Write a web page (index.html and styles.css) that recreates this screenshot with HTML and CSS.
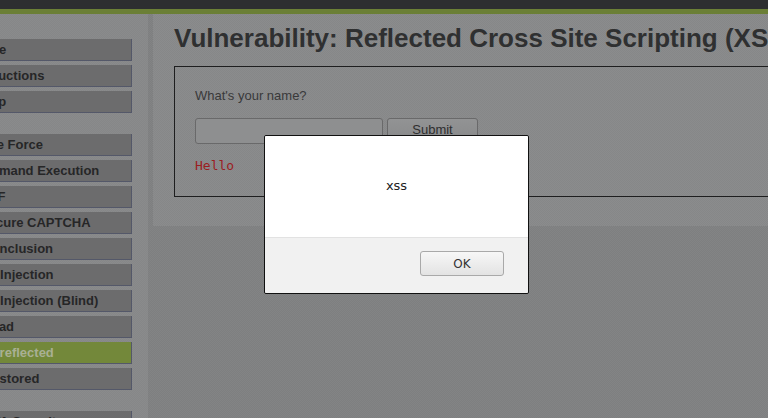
FILE: index.html
```html
<!DOCTYPE html>
<html>
<head>
<meta charset="utf-8">
<link rel="stylesheet" href="styles.css">
</head>
<body>
<div class="topbar"></div>
<div class="page">
  <nav class="sidebar">
    <ul class="menu">
      <li>Home</li>
      <li>Instructions</li>
      <li>Setup</li>
    </ul>
    <ul class="menu">
      <li>Brute Force</li>
      <li>Command Execution</li>
      <li>CSRF</li>
      <li>Insecure CAPTCHA</li>
      <li>File Inclusion</li>
      <li>SQL Injection</li>
      <li>SQL Injection (Blind)</li>
      <li>Upload</li>
      <li class="active">XSS reflected</li>
      <li>XSS stored</li>
    </ul>
    <ul class="menu">
      <li>DVWA Security</li>
      <li>PHP Info</li>
      <li>About</li>
    </ul>
  </nav>
  <main class="main">
    <div class="main-body">
      <h1 class="title">Vulnerability: Reflected Cross Site Scripting (XSS)</h1>
      <div class="vuln-box">
        <form class="form">
          <p class="label">What's your name?</p>
          <div class="row">
            <input class="field" type="text">
            <button class="submit" type="button">Submit</button>
          </div>
        </form>
        <pre class="output">Hello</pre>
      </div>
    </div>
  </main>
</div>
<div class="dialog">
  <div class="dialog-msg">xss</div>
  <div class="dialog-actions">
    <button class="ok" type="button">OK</button>
  </div>
</div>
</body>
</html>
```
FILE: styles.css
```css
html, body {
  margin: 0;
  padding: 0;
  height: 100%;
  overflow: hidden;
}
body {
  background-color: #838485;
  background-image: repeating-conic-gradient(rgba(0,0,0,0.035) 0% 25%, transparent 0% 50%);
  background-size: 2px 2px;
  font-family: "Liberation Sans", Arial, sans-serif;
}
.topbar {
  height: 9px;
  background: #2d2e30;
  border-bottom: 5px solid #6b7f36;
}
.page {
  display: flex;
  gap: 5px;
  height: calc(100% - 14px);
}
.sidebar {
  flex: 0 0 148px;
  background-color: #8a8b8c;
  background-image: repeating-conic-gradient(rgba(0,0,0,0.03) 0% 25%, transparent 0% 50%);
  background-size: 2px 2px;
  padding-top: 25px;
  overflow: hidden;
}
.menu {
  list-style: none;
  margin: 0 0 21px -40px;
  padding: 0;
  width: 172px;
}
.menu li {
  box-sizing: border-box;
  height: 22px;
  line-height: 21px;
  margin-bottom: 4px;
  padding-left: 10px;
  background: #6c6c6d;
  border-right: 1px solid #545869;
  border-bottom: 1px solid #545869;
  color: #262627;
  font-weight: bold;
  font-size: 13px;
  white-space: nowrap;
}
.menu li:last-child {
  margin-bottom: 0;
}
.menu li.active {
  background: #73883a;
  color: #a9b094;
}
.main {
  flex: 1;
  min-width: 0;
  overflow: hidden;
}
.main-body {
  background-color: #8b8c8d;
  background-image: repeating-conic-gradient(rgba(0,0,0,0.035) 0% 25%, transparent 0% 50%);
  background-size: 2px 2px;
  padding: 9px 0 29px 21px;
}
.title {
  margin: 0 0 13px;
  font-size: 26px;
  line-height: 30px;
  font-weight: bold;
  color: #2f3031;
  white-space: nowrap;
}
.vuln-box {
  width: 700px;
  border: 1px solid #1e1e1f;
  padding: 21px 20px 23px;
}
.form {
  margin: 0 0 14px;
}
.label {
  margin: 0 0 15px;
  font-size: 13px;
  line-height: 15px;
  color: #39393a;
}
.row {
  display: flex;
  gap: 4px;
}
.field {
  box-sizing: border-box;
  width: 188px;
  height: 26px;
  margin: 0;
  border: 1px solid #69696a;
  border-radius: 3px;
  background: #8e8f90;
}
.submit {
  box-sizing: border-box;
  width: 91px;
  height: 26px;
  margin: 0;
  padding: 0 0 3px;
  border: 1px solid #69696a;
  border-radius: 3px;
  background: linear-gradient(#929394, #88898a);
  font-family: "Liberation Sans", Arial, sans-serif;
  font-size: 13px;
  color: #2e2e2f;
}
.output {
  margin: 0;
  font-family: "DejaVu Sans Mono", monospace;
  font-size: 13px;
  line-height: 15px;
  color: #9b1d1f;
}
.dialog {
  position: absolute;
  left: 264px;
  top: 135px;
  width: 265px;
  height: 159px;
  box-sizing: border-box;
  border: 1px solid #111;
  border-radius: 2px;
  display: flex;
  flex-direction: column;
  overflow: hidden;
  font-family: "DejaVu Sans", sans-serif;
}
.dialog-msg {
  flex: 0 0 101px;
  background: #ffffff;
  display: flex;
  align-items: center;
  justify-content: center;
  font-size: 13px;
  color: #222;
  padding-bottom: 2px;
  box-sizing: border-box;
}
.dialog-actions {
  flex: 1;
  background: #f1f1f1;
  border-top: 1px solid #e2e2e2;
  display: flex;
  justify-content: flex-end;
  align-items: flex-start;
  padding: 13px 24px 0 0;
}
.ok {
  box-sizing: border-box;
  width: 84px;
  height: 25px;
  margin: 0;
  padding: 0;
  border: 1px solid #a9a9a9;
  border-radius: 3px;
  background: linear-gradient(#f7f7f7, #e3e3e3);
  font-family: "DejaVu Sans", sans-serif;
  font-size: 12px;
  color: #333;
}
```
